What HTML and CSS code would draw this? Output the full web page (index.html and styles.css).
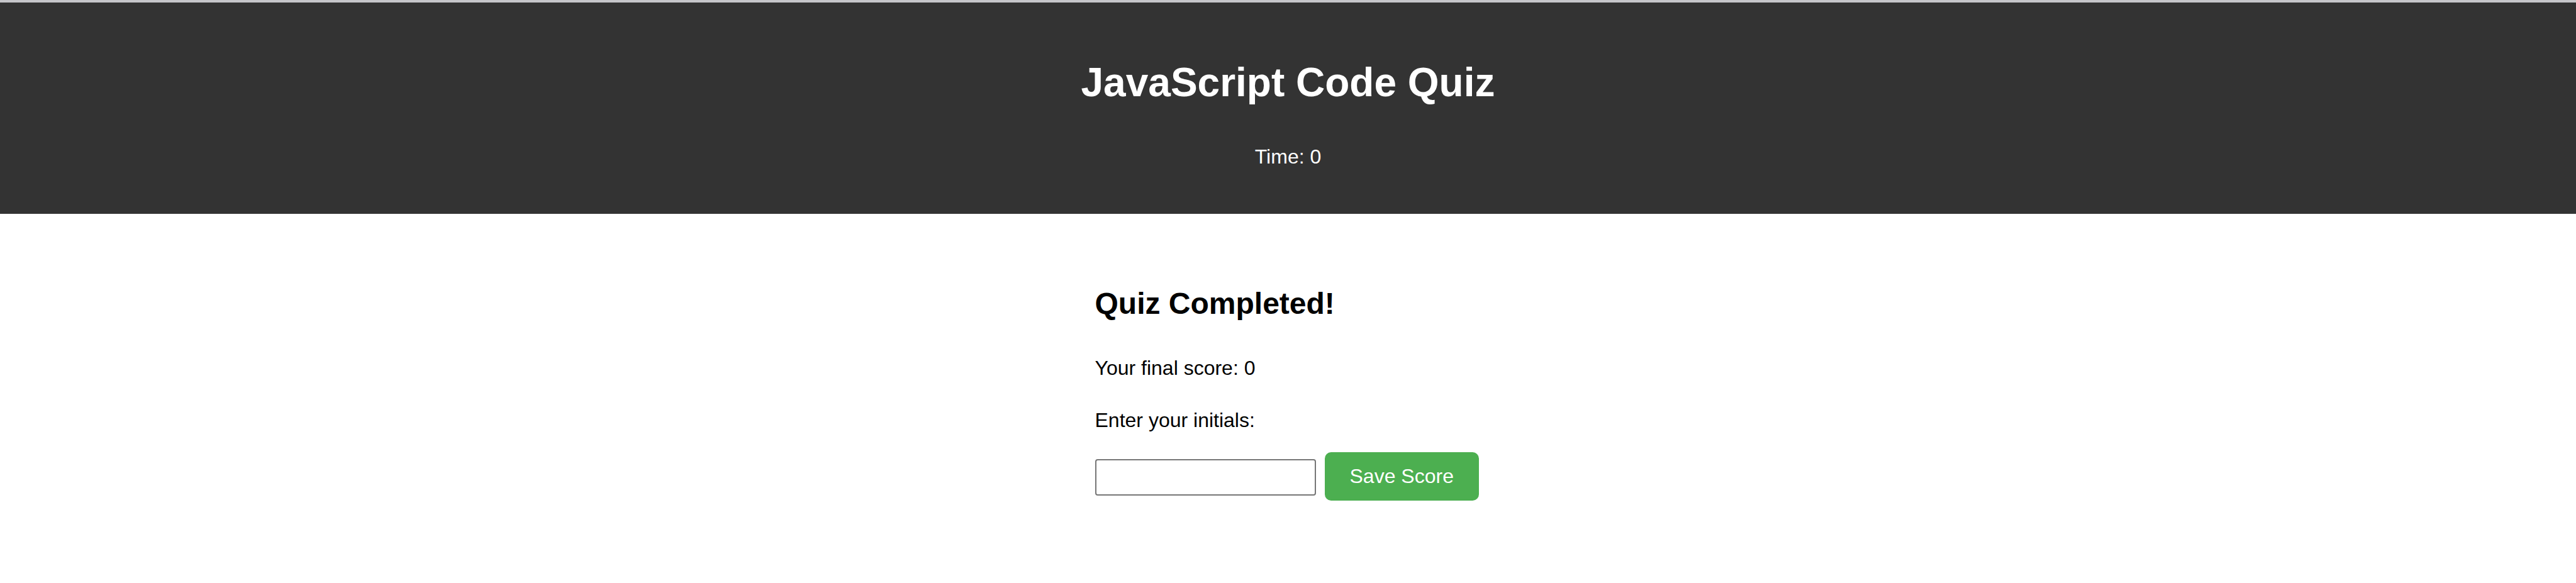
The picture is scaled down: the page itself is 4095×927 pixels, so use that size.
FILE: index.html
```html
<!DOCTYPE html>
<html lang="en">
<head>
<meta charset="utf-8">
<title>JavaScript Code Quiz</title>
<link rel="stylesheet" href="styles.css">
</head>
<body>
<header class="site-header">
  <h1 class="site-title">JavaScript Code Quiz</h1>
  <p class="timer">Time: <span class="timer-value">0</span></p>
</header>
<main class="container">
  <section class="end-screen">
    <h2 class="end-title">Quiz Completed!</h2>
    <p class="final-score">Your final score: <span>0</span></p>
    <p class="initials-label">Enter your initials:</p>
    <div class="save-row">
      <input type="text" class="initials-input" aria-label="Initials">
      <button type="button" class="save-btn">Save Score</button>
    </div>
  </section>
</main>
</body>
</html>
```

FILE: styles.css
```css
html, body {
  margin: 0;
  padding: 0;
  background: #ffffff;
}

body {
  font-family: "Liberation Sans", Arial, sans-serif;
  color: #000000;
}

.site-header {
  background: #333333;
  color: #ffffff;
  text-align: center;
  border-top: 4px solid #c6c6ca;
  padding: 40px 40px;
}

.site-title {
  font-size: 64px;
  font-weight: bold;
  line-height: normal;
  margin: 50px 0 63px;
}

.timer {
  font-size: 32px;
  line-height: normal;
  margin: 0 0 32px;
}

.container {
  width: 614px;
  margin: 0 auto;
  padding-top: 115px;
}

.end-title {
  font-size: 48px;
  font-weight: bold;
  line-height: normal;
  margin: 0 0 57px;
}

.final-score {
  font-size: 32px;
  line-height: normal;
  margin: 0 0 46px;
}

.initials-label {
  font-size: 32px;
  line-height: normal;
  margin: 0 0 32px;
}

.save-row {
  display: flex;
  align-items: flex-start;
  gap: 14px;
}

.initials-input {
  box-sizing: border-box;
  width: 351px;
  height: 58px;
  margin-top: 11px;
  border: 2px solid #767676;
  border-radius: 4px;
  padding: 0 8px;
  font-family: "Liberation Sans", Arial, sans-serif;
  font-size: 32px;
  background: #ffffff;
}

.save-btn {
  box-sizing: border-box;
  height: 77px;
  padding: 0 40px;
  border: none;
  border-radius: 10px;
  background: #4caf50;
  color: #ffffff;
  font-family: "Liberation Sans", Arial, sans-serif;
  font-size: 32px;
  line-height: normal;
  cursor: pointer;
}
```
